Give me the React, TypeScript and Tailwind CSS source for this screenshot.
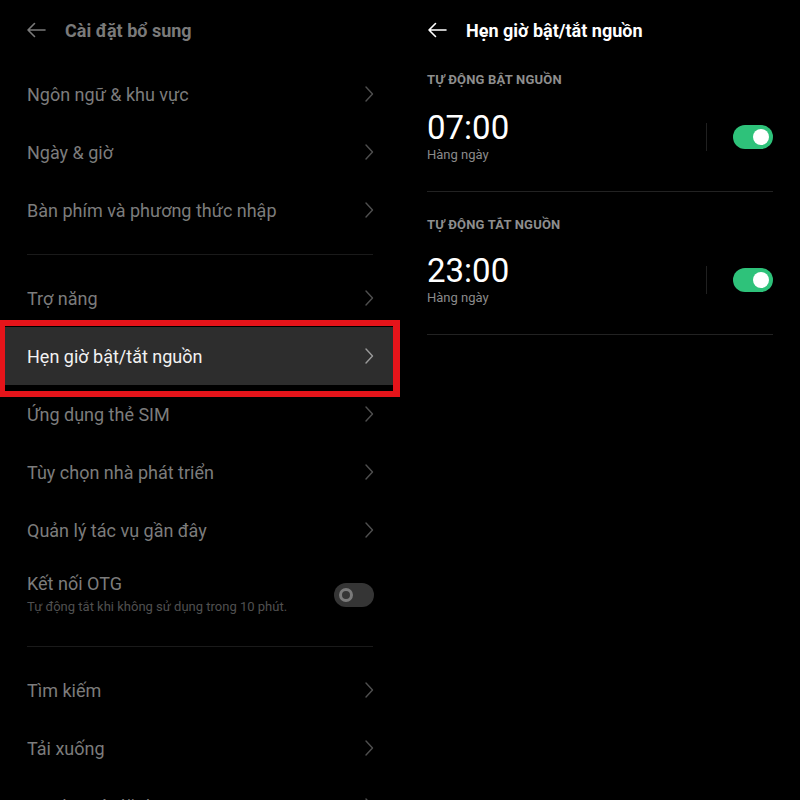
import React from "react";

const Chevron = ({ color = "#4f4f4f" }: { color?: string }) => (
  <svg width="10" height="18" viewBox="0 0 10 18" fill="none">
    <polyline points="2,2 8.5,9 2,16" stroke={color} strokeWidth="1.4" strokeLinecap="round" strokeLinejoin="round" />
  </svg>
);

const BackArrow = ({ color }: { color: string }) => (
  <svg width="20" height="16" viewBox="0 0 20 16" fill="none">
    <path d="M19 8H2M8.5 1.5L2 8l6.5 6.5" stroke={color} strokeWidth="1.6" strokeLinecap="round" strokeLinejoin="round" />
  </svg>
);

const Row = ({ label }: { label: string }) => (
  <div className="h-[58px] shrink-0 flex items-center justify-between pl-[27px] pr-[26px]">
    <span className="text-[18px] text-[#7c7c7c]">{label}</span>
    <Chevron />
  </div>
);

const Divider = () => (
  <div className="h-[30px] shrink-0 flex items-center px-[27px]">
    <div className="h-px w-full bg-[#1a1a1a]" />
  </div>
);

const Toggle = () => (
  <div className="w-[40px] h-[24px] rounded-full bg-[#2ec27a] flex items-center justify-end pr-[4px]">
    <div className="w-[16px] h-[16px] rounded-full bg-white" />
  </div>
);

const TimeBlock = ({ header, time, first }: { header: string; time: string; first?: boolean }) => (
  <div className="shrink-0">
    <div className={(first ? "pt-[11px]" : "pt-[24px]") + " text-[13px] font-bold text-[#8e8e8e] tracking-[0.2px] leading-[18px]"}>{header}</div>
    <div className={(first ? "mt-[21px]" : "mt-[19px]") + " flex items-center justify-between"}>
      <div>
        <div className="text-[33px] leading-[36px] text-white">{time}</div>
        <div className="text-[13px] leading-[18px] text-[#8a8a8a]">Hàng ngày</div>
      </div>
      <div className="flex items-center">
        <div className="w-px h-[28px] bg-[#202020] mr-[26px]" />
        <Toggle />
      </div>
    </div>
    <div className="h-px bg-[#222] mt-[27px]" />
  </div>
);

export default function App() {
  return (
    <div className="w-[800px] h-[800px] bg-black flex overflow-hidden" style={{ fontFamily: "Roboto, 'Noto Sans', sans-serif" }}>
      {/* Left panel */}
      <div className="w-[400px] h-full flex flex-col">
        <div className="h-[60px] shrink-0 flex items-center pl-[26px]">
          <BackArrow color="#7a7a7a" />
          <span className="ml-[19px] text-[18px] font-bold text-[#7a7a7a]">Cài đặt bổ sung</span>
        </div>
        <div className="h-[5px] shrink-0" />
        <Row label="Ngôn ngữ & khu vực" />
        <Row label="Ngày & giờ" />
        <Row label="Bàn phím và phương thức nhập" />
        <Divider />
        <Row label="Trợ năng" />
        <div className="relative shrink-0">
          <div className="h-[58px] flex items-center justify-between pl-[27px] pr-[26px] bg-[#2d2d2d]">
            <span className="text-[18px] text-[#f2f2f2]">Hẹn giờ bật/tắt nguồn</span>
            <Chevron color="#9a9a9a" />
          </div>
          <div className="absolute left-0 right-0 top-[-7px] bottom-[-12px] border-l-[5px] border-r-[7px] border-t-[6px] border-b-[6px] border-[#e5141a]" />
        </div>
        <Row label="Ứng dụng thẻ SIM" />
        <Row label="Tùy chọn nhà phát triển" />
        <Row label="Quản lý tác vụ gần đây" />
        <div className="h-[72px] shrink-0 flex items-center justify-between pl-[27px] pr-[26px]">
          <div className="-mt-[2px]">
            <div className="text-[18px] leading-[24px] text-[#7c7c7c]">Kết nối OTG</div>
            <div className="text-[13px] leading-[18px] mt-[2px] text-[#505050]">Tự động tắt khi không sử dụng trong 10 phút.</div>
          </div>
          <div className="w-[40px] h-[24px] rounded-full bg-[#353535] flex items-center pl-[5px]">
            <div className="w-[14px] h-[14px] rounded-full border-[3px] border-[#7a7a7a]" />
          </div>
        </div>
        <Divider />
        <Row label="Tìm kiếm" />
        <Row label="Tải xuống" />
        <Row label="Sao lưu và đặt lại" />
      </div>
      {/* Right panel */}
      <div className="w-[400px] h-full flex flex-col px-[27px]">
        <div className="h-[60px] shrink-0 flex items-center">
          <BackArrow color="#ffffff" />
          <span className="ml-[19px] text-[18px] font-bold text-white">Hẹn giờ bật/tắt nguồn</span>
        </div>
        <TimeBlock header="TỰ ĐỘNG BẬT NGUỒN" time="07:00" first />
        <TimeBlock header="TỰ ĐỘNG TẮT NGUỒN" time="23:00" />
      </div>
    </div>
  );
}
